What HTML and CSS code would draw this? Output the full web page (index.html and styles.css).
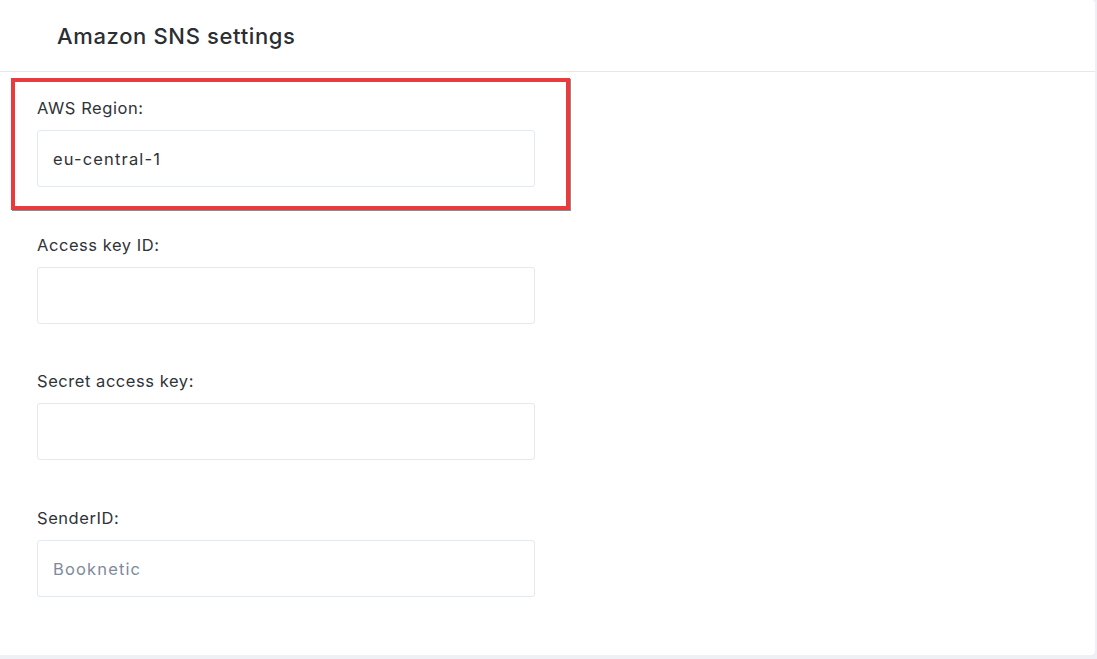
FILE: index.html
```html
<!DOCTYPE html>
<html lang="en">
<head>
<meta charset="utf-8">
<title>Amazon SNS settings</title>
<link rel="stylesheet" href="styles.css">
</head>
<body>
<div class="card">
  <div class="card-header">
    <h2 class="title">Amazon SNS settings</h2>
  </div>
  <div class="card-body">
    <div class="field field-highlight">
      <label class="label" for="region">AWS Region:</label>
      <input class="input" id="region" type="text" value="eu-central-1">
      <div class="highlight"></div>
    </div>
    <div class="field">
      <label class="label" for="key">Access key ID:</label>
      <input class="input" id="key" type="text">
    </div>
    <div class="field">
      <label class="label" for="secret">Secret access key:</label>
      <input class="input" id="secret" type="text">
    </div>
    <div class="field">
      <label class="label" for="sender">SenderID:</label>
      <input class="input" id="sender" type="text" placeholder="Booknetic">
    </div>
  </div>
</div>
</body>
</html>
```
FILE: styles.css
```css
html, body {
  margin: 0;
  padding: 0;
}
body {
  background: #eff0f6;
  font-family: "Inter", "Noto Sans", sans-serif;
  color: #2e3136;
  width: 1097px;
  height: 659px;
  overflow: hidden;
}
.card {
  width: 1095px;
  height: 655px;
  background: #ffffff;
  border-radius: 0 4px 4px 0;
  box-sizing: border-box;
}
.card-header {
  height: 72px;
  box-sizing: border-box;
  border-bottom: 1px solid #e6e7ef;
  display: flex;
  align-items: center;
  padding-left: 57px;
}
.title {
  margin: 0;
  font-size: 22px;
  font-weight: 500;
  letter-spacing: 0.65px;
  color: #2b2e33;
}
.card-body {
  padding: 25px 0 0 37px;
  display: flex;
  flex-direction: column;
  gap: 46.7px;
}
.field {
  display: flex;
  flex-direction: column;
  gap: 11px;
  width: 498px;
}
.field-highlight {
  position: relative;
}
.highlight {
  position: absolute;
  left: -26px;
  top: -19px;
  width: 559px;
  height: 132px;
  box-sizing: border-box;
  border: 4px solid #ea3a3c;
  box-shadow: 1px 1px 0 #8d8d8d;
  pointer-events: none;
}
.label {
  font-size: 16.5px;
  line-height: 22px;
  letter-spacing: 0.55px;
  color: #303338;
}
.input {
  height: 57px;
  box-sizing: border-box;
  border: 1px solid #e3e8f1;
  border-radius: 3px;
  padding: 0 15px;
  font-family: "Inter", "Noto Sans", sans-serif;
  font-size: 16.5px;
  letter-spacing: 1.15px;
  color: #2f3237;
  background: #ffffff;
  outline: none;
}
.input::placeholder {
  color: #808a9b;
  opacity: 1;
}
```
